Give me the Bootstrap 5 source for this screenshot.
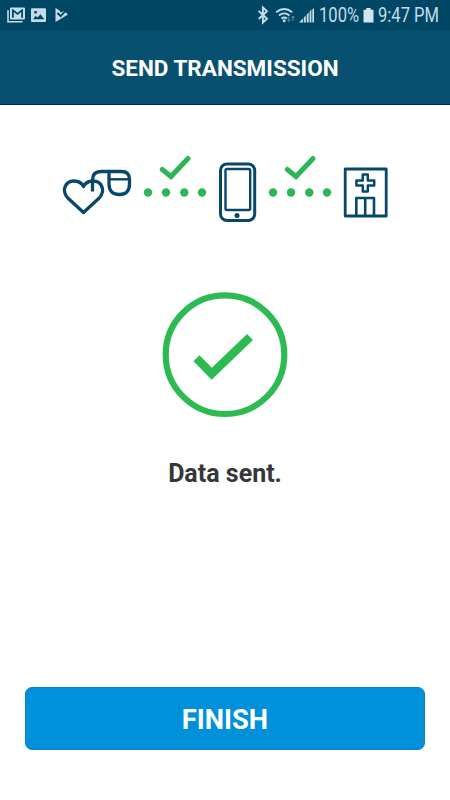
<!DOCTYPE html>
<html lang="en">
<head>
<meta charset="utf-8">
<meta name="viewport" content="width=device-width, initial-scale=1">
<title>Send Transmission</title>
<link href="https://cdn.jsdelivr.net/npm/bootstrap@5.3.0/dist/css/bootstrap.min.css" rel="stylesheet">
<style>
  body { font-family: Roboto, "Liberation Sans", sans-serif; height: 800px; overflow: hidden; }
  svg { display: block; flex: none; }
  .statusbar { height: 30px; background: #004765; color: #c3dde8; font-size: 19.5px; line-height: 30px; }
  .narrow { transform: scaleX(.85); transform-origin: 0 50%; white-space: nowrap; flex: none; padding-top: 2px; }
  .pct { width: 44px; margin-left: 4px; }
  .clock { width: 62px; margin-left: 4px; }
  .status-right { padding-right: 10px; }
  .titlebar { height: 75px; background: #08506f; border-bottom: 1px solid #022c45; }
  .titlebar h1 { font-size: 22.5px; line-height: 28px; padding-top: 2px; }
  .route { height: 90px; margin-top: 40px; }
  .result { margin-top: 55px; }
  .message { font-size: 25px; line-height: 30px; margin-top: 39px; color: #353739; }
  .footer-area { padding: 0 25px 50px; }
  .btn-finish { --bs-btn-color: #fff; --bs-btn-bg: #0091da; --bs-btn-border-color: #0686c8; --bs-btn-hover-bg: #0084c8; --bs-btn-hover-color: #fff;
    --bs-btn-border-radius: 7px; height: 63px; font-size: 27.3px; line-height: 1; }
  .btn-finish span { display: block; padding-top: 4px; }
</style>
<script src="https://cdn.jsdelivr.net/npm/bootstrap@5.3.0/dist/js/bootstrap.bundle.min.js"></script>
</head>
<body class="d-flex flex-column bg-white">
<header>
  <div class="statusbar d-flex align-items-center">
    <svg width="75" height="30" viewBox="0 0 75 30" fill="#c3dde8" aria-hidden="true">
      <path d="M8 10v11.700h14.500" fill="none" stroke="#c3dde8" stroke-width="1.600"/>
      <path fill-rule="evenodd" d="M11 7.500h13a1 1 0 0 1 1 1v10a1 1 0 0 1-1 1H11a1 1 0 0 1-1-1v-10a1 1 0 0 1 1-1zm1 1.700v8.500h1.800v-5.700l3.700 3 3.700-3v5.700H23V9.200h-1l-4.500 3.600L13 9.200z"/>
      <path fill-rule="evenodd" d="M32 8.300h13a1 1 0 0 1 1 1V21a1 1 0 0 1-1 1H32a1 1 0 0 1-1-1V9.300a1 1 0 0 1 1-1zm1 10.900h11.300l-3.800-5-3 3.300-1.800-1.800zm1.300-8.200v2.600h2.500V11z"/>
      <path d="M55.500 8l3 1.700 2.500 2.800 3-1.500 4 3.500L55.500 22z"/>
      <path d="M57.500 13l3.200 3.200 5.500-6" fill="none" stroke="#004765" stroke-width="1.800"/>
    </svg>
    <div class="status-right d-flex align-items-center ms-auto">
      <svg width="60" height="30" viewBox="254 0 60 30" aria-hidden="true">
        <path d="M257.700 11l8.300 7.800-4.100 3.700V7.500l4.100 3.700-8.300 7.800" fill="none" stroke="#c3dde8" stroke-width="1.900"/>
        <g fill="none" stroke="#c3dde8" stroke-width="1.800">
          <path d="M275.200 12.300q8-6.500 16 0M278 15.500q5.200-4.200 10.500 0M280.500 18.500q2.800-2 5.500 0"/>
        </g>
        <circle cx="283.200" cy="20.800" r="1.500" fill="#c3dde8"/>
        <path d="M287.800 16.500v5m-1.500-2 1.500 2 1.500-2M292 21v-5m-1.500 2 1.500-2 1.500 2" stroke="#588da4" fill="none"/>
        <path d="M298 22.500l4-4v4zM302.800 22.500v-5l2-2v7zM305.700 22.500v-8l2-2v10zM308.600 22.500v-11l1.800-2v13zM311.300 22.500V9.500l1.700-1.500v14.500z" fill="#c3dde8"/>
      </svg>
      <span class="narrow pct">100%</span>
      <svg width="11" height="30" viewBox="0 0 11 30" aria-hidden="true"><path d="M3.200 8h4.500v1.800h2.800V22.500H.500V9.800h2.700z" fill="#d0e5ee"/></svg>
      <span class="narrow clock">9:47 PM</span>
    </div>
  </div>
  <div class="titlebar d-flex align-items-center justify-content-center text-white">
    <h1 class="fw-bold mb-0">SEND TRANSMISSION</h1>
  </div>
</header>
<main class="d-flex flex-column align-items-center flex-grow-1">
  <svg class="route" width="450" viewBox="0 145 450 90" fill="none" stroke="#07476a" stroke-width="3.300" role="img" aria-label="Heart device to phone to clinic">
    <path d="M83.500 212.500 67.800 198c-7-8-2-17 6-17 5 0 8.200 2.500 9.700 5.500 1.500-3 4.700-5.500 9.700-5.500 8 0 13 9 6 17z" stroke-linejoin="round"/>
    <path d="M92.500 191.500V180q0-8.500 8.500-8.500h20.500q8 0 8 8v4.500q0 10.500-10.200 10.500t-10.300-10.500v-12" stroke-linejoin="round"/>
    <path d="M109 179.300h21" stroke-width="2.400"/>
    <rect x="220.500" y="164" width="34.200" height="56.500" rx="6.500" stroke-width="3"/>
    <rect x="225.500" y="169" width="24.700" height="41" rx="1.500" stroke-width="2.400"/>
    <circle cx="237" cy="215.400" r="2.500" fill="#07476a" stroke="none"/>
    <rect x="345.200" y="169" width="41" height="47" stroke-width="2.800" stroke-linejoin="round"/>
    <path d="M362.800 174.500h5v6h6.400v5h-6.400v6h-5v-6h-6.400v-5h6.400z" stroke-width="2.500" stroke-linejoin="round"/>
    <path d="M356.300 216v-18h17.700v18M365.200 198v18" stroke-width="2.600" stroke-linejoin="round"/>
    <g fill="#2fb457" stroke="none">
      <circle cx="148" cy="192.500" r="4.200"/><circle cx="166" cy="192.500" r="4.200"/><circle cx="184.300" cy="192.500" r="4.200"/><circle cx="202" cy="192.500" r="4.200"/>
      <circle cx="273" cy="192.500" r="4.200"/><circle cx="291" cy="192.500" r="4.200"/><circle cx="309.300" cy="192.500" r="4.200"/><circle cx="327" cy="192.500" r="4.200"/>
    </g>
    <path d="M162.300 169.500l8.700 7L188 158.500M287.300 169.500l8.700 7L313 158.500" stroke="#2fb457" stroke-width="5" stroke-linecap="round"/>
  </svg>
  <svg class="result" width="130" height="130" viewBox="160 290 130 130" fill="none" stroke="#2dba51" role="img" aria-label="Success">
    <circle cx="225" cy="354.700" r="59.300" stroke-width="6.200"/>
    <path d="M196.500 358.300l15.200 15.500L250 337" stroke-width="8.500"/>
  </svg>
  <p class="message fw-bold mb-0">Data sent.</p>
</main>
<footer class="footer-area">
  <button type="button" class="btn btn-finish w-100 fw-bold p-0"><span>FINISH</span></button>
</footer>
</body>
</html>
